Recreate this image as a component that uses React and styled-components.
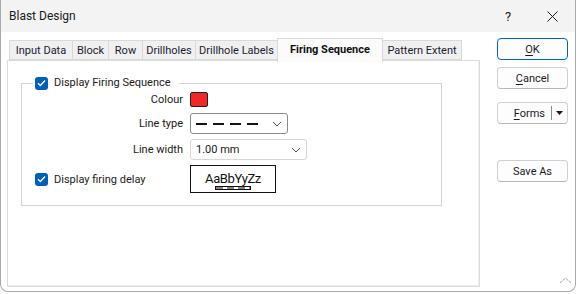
import React from 'react';
import styled, { createGlobalStyle } from 'styled-components';

const GlobalStyle = createGlobalStyle`
  html, body {
    margin: 0;
    padding: 0;
    background: #ffffff;
  }
  body {
    font-family: Roboto, "Noto Sans", sans-serif;
    font-size: 11px;
    color: #1a1a1a;
  }
`;

const tabs = [
  { label: 'Input Data', width: 64 },
  { label: 'Block', width: 37 },
  { label: 'Row', width: 35 },
  { label: 'Drillholes', width: 54 },
  { label: 'Drillhole Labels', width: 83 },
  { label: 'Firing Sequence', width: 106, active: true },
  { label: 'Pattern Extent', width: 80 },
];

const Chevron = ({ color = '#555' }) => (
  <svg width="10" height="6" viewBox="0 0 10 6">
    <polyline points="1,1 5,5 9,1" fill="none" stroke={color} strokeWidth="1" />
  </svg>
);

const Check = () => (
  <svg width="9" height="8" viewBox="0 0 9 8">
    <polyline points="1,4.2 3.4,6.5 8,1.5" fill="none" stroke="#fff" strokeWidth="1.3" />
  </svg>
);

const App = () => {
  return (
    <>
      <GlobalStyle />
      <Window>
        <TitleBar>
          <Title>Blast Design</Title>
          <TitleButtons>
            <Help>?</Help>
            <Close>
              <svg width="11" height="11" viewBox="0 0 11 11">
                <path d="M0.5 0.5 L10.5 10.5 M10.5 0.5 L0.5 10.5" stroke="#1a1a1a" strokeWidth="1" />
              </svg>
            </Close>
          </TitleButtons>
        </TitleBar>

        <Body>
          <Main>
            <TabRow>
              {tabs.map(({ label, width, active }) => (
                <Tab key={label} $active={active} style={{ width }}>
                  {label}
                </Tab>
              ))}
            </TabRow>
            <Panel>
              <Group>
                <Legend>
                  <CheckBox><Check /></CheckBox>
                  Display Firing Sequence
                </Legend>
                <Form>
                  <Label>Colour</Label>
                  <Swatch />

                  <Label>Line type</Label>
                  <Combo $width={98} $strong>
                    <svg width="64" height="4" viewBox="0 0 64 4">
                      <line x1="0" y1="2" x2="64" y2="2" stroke="#111" strokeWidth="2" strokeDasharray="11 6" />
                    </svg>
                    <Chevron />
                  </Combo>

                  <Label>Line width</Label>
                  <Combo $width={117}>
                    <span>1.00 mm</span>
                    <Chevron />
                  </Combo>

                  <CheckRow>
                    <CheckBox><Check /></CheckBox>
                    Display firing delay
                  </CheckRow>
                  <FontBox>
                    <Sample>AaBbYyZz</Sample>
                    <svg width="36" height="4" viewBox="0 0 36 4">
                      <rect x="0.5" y="0.5" width="35" height="3" fill="#fff" stroke="#111" strokeWidth="1" />
                      <line x1="1" y1="2" x2="35" y2="2" stroke="#111" strokeWidth="1" strokeDasharray="7 4" />
                    </svg>
                  </FontBox>
                </Form>
              </Group>
            </Panel>
          </Main>

          <Side>
            <Button $default><u>O</u>K</Button>
            <Button $gap={7}><u>C</u>ancel</Button>
            <SplitButton $gap={13}>
              <SplitLabel><u>F</u>orms</SplitLabel>
              <SplitDivider />
              <SplitArrow>
                <svg width="7" height="4" viewBox="0 0 7 4">
                  <polygon points="0,0 7,0 3.5,4" fill="#1a1a1a" />
                </svg>
              </SplitArrow>
            </SplitButton>
            <Button $gap={36}>Save As</Button>
          </Side>
        </Body>

        <Grip>
          <svg width="13" height="7" viewBox="0 0 13 7">
            <polyline points="1,6 6.5,1 12,6" fill="none" stroke="#777" strokeWidth="1" strokeDasharray="1 1" />
          </svg>
        </Grip>
      </Window>
    </>
  );
};

export default App;

const Window = styled.div`
  position: relative;
  box-sizing: border-box;
  width: 576px;
  height: 292px;
  border: 1px solid #a8a8a8;
  border-top: none;
  border-radius: 0 0 8px 8px;
  background: #ffffff;
  display: flex;
  flex-direction: column;
  overflow: hidden;
`;

const TitleBar = styled.div`
  height: 32px;
  flex: none;
  background: #f3f3f3;
  display: flex;
  align-items: center;
  justify-content: space-between;
  padding-left: 8px;
`;

const Title = styled.div`
  font-size: 12px;
  color: #1a1a1a;
`;

const TitleButtons = styled.div`
  display: flex;
  align-items: center;
  height: 100%;
`;

const Help = styled.div`
  width: 46px;
  text-align: center;
  font-size: 13px;
  margin-right: -2px;
  padding-left: 4px;
`;

const Close = styled.div`
  width: 46px;
  display: flex;
  justify-content: center;
`;

const Body = styled.div`
  display: flex;
  padding: 6px 0 0 6px;
`;

const Main = styled.div`
  width: 473px;
  display: flex;
  flex-direction: column;
`;

const TabRow = styled.div`
  display: flex;
  align-items: flex-end;
  height: 22px;
  padding-left: 2px;
  position: relative;
  z-index: 1;
`;

const Tab = styled.div`
  box-sizing: border-box;
  flex: none;
  height: ${p => (p.$active ? '24px' : '20px')};
  margin-left: -1px;
  margin-bottom: ${p => (p.$active ? '-2px' : '0')};
  padding-bottom: ${p => (p.$active ? '2px' : '0')};
  border: 1px solid #d9d9d9;
  border-bottom: ${p => (p.$active ? 'none' : '1px solid #d9d9d9')};
  background: ${p => (p.$active ? '#fbfbfb' : '#f0f0f0')};
  font-weight: ${p => (p.$active ? 700 : 400)};
  color: ${p => (p.$active ? '#111' : '#1b1b33')};
  display: flex;
  align-items: center;
  justify-content: center;
  white-space: nowrap;
  font-size: 11px;
  &:first-child {
    margin-left: 0;
  }
`;

const Panel = styled.div`
  box-sizing: border-box;
  height: 227px;
  border: 1px solid #dcdcdc;
  box-shadow: inset -1px -1px 0 #eeeeee;
  background: #ffffff;
  padding: 15px 37px 0 13px;
`;

const Group = styled.fieldset`
  margin: 0;
  padding: 2px 0 12px 0;
  border: 1px solid #d4d4d4;
  min-width: 0;
`;

const Legend = styled.legend`
  display: flex;
  align-items: center;
  gap: 6px;
  margin-left: 11px;
  padding: 0 8px 0 2px;
  font-size: 11px;
  line-height: 14px;
`;

const CheckBox = styled.span`
  box-sizing: border-box;
  width: 13px;
  height: 13px;
  border-radius: 3px;
  background: #005fb8;
  display: inline-flex;
  align-items: center;
  justify-content: center;
  flex: none;
`;

const Form = styled.div`
  display: grid;
  grid-template-columns: 161px auto;
  grid-template-rows: 16px 21px 21px 28px;
  column-gap: 7px;
  row-gap: 5px;
  align-items: center;
  justify-items: start;
`;

const Label = styled.div`
  justify-self: end;
  font-size: 11px;
  line-height: 14px;
`;

const Swatch = styled.div`
  box-sizing: border-box;
  width: 18px;
  height: 15px;
  border: 1px solid #222;
  border-radius: 2px;
  background: #f02828;
  align-self: start;
`;

const Combo = styled.div`
  box-sizing: border-box;
  width: ${p => p.$width}px;
  height: 21px;
  border: 1px solid ${p => (p.$strong ? '#8c8c8c' : '#d6d6d6')};
  border-radius: 3px;
  background: #ffffff;
  display: flex;
  align-items: center;
  justify-content: space-between;
  padding: 0 5px 0 5px;
  font-size: 11px;
`;

const CheckRow = styled.div`
  display: flex;
  align-items: center;
  gap: 6px;
  justify-self: start;
  padding-left: 13px;
  font-size: 11px;
`;

const FontBox = styled.div`
  box-sizing: border-box;
  width: 86px;
  height: 28px;
  border: 1px solid #111;
  display: flex;
  flex-direction: column;
  align-items: center;
  justify-content: center;
  padding-top: 3px;
`;

const Sample = styled.div`
  font-size: 13px;
  line-height: 15px;
  letter-spacing: -0.4px;
  color: #111;
`;

const Side = styled.div`
  width: 71px;
  margin-left: 17px;
  display: flex;
  flex-direction: column;
`;

const Button = styled.div`
  box-sizing: border-box;
  height: 22px;
  margin-top: ${p => p.$gap || 0}px;
  border: 1px solid ${p => (p.$default ? '#0067c0' : '#d0d0d0')};
  border-bottom-color: ${p => (p.$default ? '#0067c0' : '#b8b8b8')};
  border-radius: 4px;
  background: #fdfdfd;
  display: flex;
  align-items: center;
  justify-content: center;
  font-size: 11px;
  color: #1a1a1a;
  & u {
    text-underline-offset: 2px;
  }
`;

const SplitButton = styled(Button)`
  justify-content: flex-end;
  padding-right: 4px;
`;

const SplitLabel = styled.span`
  margin-right: 6px;
  & u {
    text-underline-offset: 2px;
  }
`;

const SplitDivider = styled.span`
  width: 1px;
  height: 14px;
  background: #8a8a8a;
`;

const SplitArrow = styled.span`
  display: flex;
  align-items: center;
  margin-left: 4px;
`;

const Grip = styled.div`
  position: absolute;
  right: 3px;
  bottom: 7px;
  display: flex;
`;
